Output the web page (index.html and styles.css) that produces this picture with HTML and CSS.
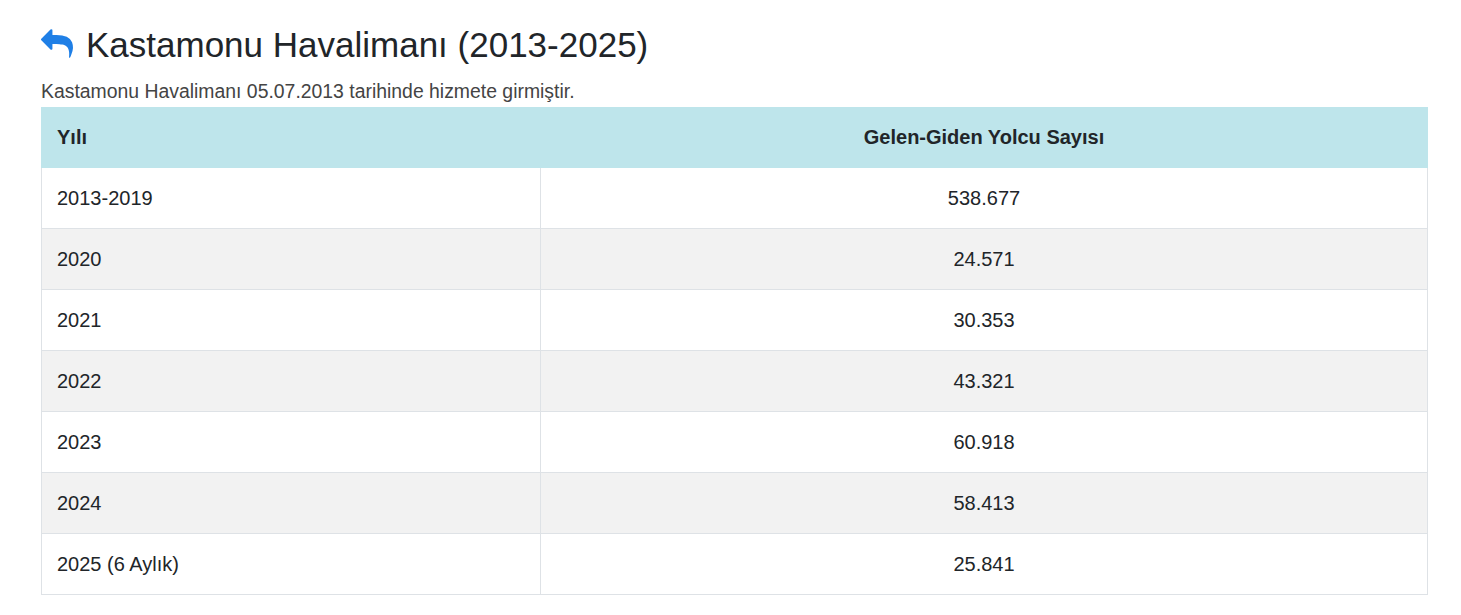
FILE: index.html
```html
<!DOCTYPE html>
<html lang="tr">
<head>
<meta charset="utf-8">
<title>Kastamonu Havalimanı</title>
<link rel="stylesheet" href="styles.css">
</head>
<body>
<div class="page">
  <h3 class="title">
    <svg class="back-icon" viewBox="0 64 1792 1600" width="32" height="29" aria-hidden="true"><path d="M1792 1120q0 166-127 451-3 7-10.5 24t-13.5 30-13 22q-12 17-28 17-15 0-23.5-10t-8.5-25q0-9 2.5-26.5t2.5-23.5q5-68 5-123 0-101-17.5-181t-48.5-138.5-80-101-105.5-69.5-133-42.5-154-21.5-175.5-6h-224v256q0 26-19 45t-45 19-45-19l-512-512q-19-19-19-45t19-45l512-512q19-19 45-19t45 19 19 45v256h224q713 0 875 403 53 134 53 333z"/></svg>
    <span>Kastamonu Havalimanı (2013-2025)</span>
  </h3>
  <p class="lead">Kastamonu Havalimanı 05.07.2013 tarihinde hizmete girmiştir.</p>
  <table class="data">
    <thead>
      <tr><th class="c-year">Yılı</th><th class="c-num">Gelen-Giden Yolcu Sayısı</th></tr>
    </thead>
    <tbody>
      <tr><td>2013-2019</td><td class="c-num">538.677</td></tr>
      <tr><td>2020</td><td class="c-num">24.571</td></tr>
      <tr><td>2021</td><td class="c-num">30.353</td></tr>
      <tr><td>2022</td><td class="c-num">43.321</td></tr>
      <tr><td>2023</td><td class="c-num">60.918</td></tr>
      <tr><td>2024</td><td class="c-num">58.413</td></tr>
      <tr><td>2025 (6 Aylık)</td><td class="c-num">25.841</td></tr>
    </tbody>
  </table>
</div>
</body>
</html>
```

FILE: styles.css
```css
html, body {
  margin: 0;
  padding: 0;
  background: #ffffff;
}
body {
  font-family: "Liberation Sans", Arial, sans-serif;
  color: #212529;
}
.page {
  padding: 24px 0 0 41px;
  width: 1387px;
}
.title {
  display: flex;
  align-items: center;
  gap: 13px;
  margin: 0 0 10px;
  font-size: 35px;
  font-weight: 400;
  line-height: 42px;
  color: #212529;
}
.back-icon {
  fill: #1f7fe6;
  flex: none;
  margin-top: -4px;
}
.lead {
  margin: 0 0 1px;
  font-size: 19.4px;
  line-height: 30px;
  color: #444;
}
.data {
  width: 1387px;
  border-collapse: collapse;
  font-size: 20px;
  line-height: 30px;
}
.data th, .data td {
  border: 1px solid #dee2e6;
  padding: 15px;
  text-align: left;
}
.data thead th {
  background: #bee5eb;
  border-color: #bee5eb;
  font-weight: 700;
  font-size: 20px;
  padding: 14px 15px 15px;
}
.data .c-year {
  width: 468px;
}
.data .c-num {
  text-align: center;
}
.data tbody tr:nth-child(even) {
  background: #f2f2f2;
}
```
